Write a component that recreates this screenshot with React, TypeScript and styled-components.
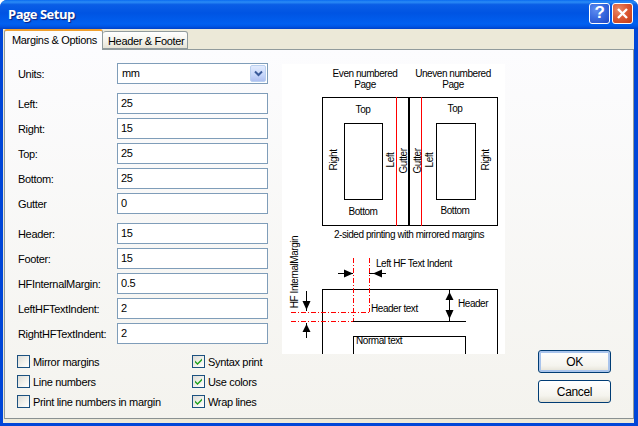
import React from 'react';
import styled, { createGlobalStyle } from 'styled-components';

const GlobalStyle = createGlobalStyle`
  html, body {
    margin: 0;
    height: 426px;
    background: #ffffff;
    overflow: hidden;
  }

  #root {
    height: 426px;
  }
`;

const uiFont = `'Liberation Sans', Arial, sans-serif`;

const Dialog = styled.div`
  display: flex;
  flex-direction: column;
  width: 638px;
  height: 426px;
  border-radius: 7px 7px 0 0;
  overflow: hidden;
  background: #0046d8;
  font-family: ${uiFont};
  font-size: 11px;
  letter-spacing: -0.33px;
  color: #000;
`;

const TitleBar = styled.div`
  display: flex;
  align-items: center;
  justify-content: space-between;
  height: 29px;
  flex-shrink: 0;
  padding: 0 5px 3px 8px;
  box-sizing: border-box;
  background: linear-gradient(180deg, #0a6af0 0, #2a8cf6 7%, #0a5ee6 16%, #0054e3 45%, #0160f0 82%, #0058e8 90%, #0042c8 100%);
`;

const Title = styled.span`
  font-family: 'Open Sans', sans-serif;
  font-weight: 700;
  font-size: 13px;
  letter-spacing: -0.5px;
  color: #fff;
  text-shadow: 1px 1px 1px #0f1f7a;
  padding-top: 2px;
`;

const Caption = styled.div`
  display: flex;
  gap: 2px;
`;

const CaptionButton = styled.div<{ $tone: 'help' | 'close' }>`
  display: flex;
  align-items: center;
  justify-content: center;
  width: 21px;
  height: 21px;
  box-sizing: border-box;
  border: 1px solid #fff;
  border-radius: 3px;
  background: ${(p) =>
    p.$tone === 'help'
      ? 'radial-gradient(circle at 30% 30%, #5f8df0 0, #3a6be0 45%, #1f46c4 100%)'
      : 'radial-gradient(circle at 30% 30%, #ea8a68 0, #dc5a35 45%, #c23a16 100%)'};
  color: #fff;
  font: 700 17px 'Liberation Sans', sans-serif;
`;

const Frame = styled.div`
  flex: 1;
  display: flex;
  flex-direction: column;
  min-height: 0;
  margin: 0 4px 3px 3px;
  background: #ece9d8;
  padding: 0 0 4px 1px;
`;

const TabStrip = styled.div`
  display: flex;
  align-items: flex-end;
  height: 20px;
  flex-shrink: 0;
  position: relative;
  z-index: 1;
`;

const Tab = styled.div<{ $active?: boolean }>`
  box-sizing: border-box;
  height: ${(p) => (p.$active ? '21px' : '18px')};
  margin-bottom: ${(p) => (p.$active ? '-1px' : '0')};
  padding: ${(p) => (p.$active ? '3px 0 0 7px' : '3px 0 0 5px')};
  width: ${(p) => (p.$active ? '99px' : '85px')};
  border: 1px solid #919b9c;
  border-bottom: ${(p) => (p.$active ? '0' : '1px solid #919b9c')};
  border-left: ${(p) => (p.$active ? '1px solid #919b9c' : '0')};
  border-radius: 3px 3px 0 0;
  background: ${(p) => (p.$active ? '#fcfcfe' : 'linear-gradient(180deg, #fff 0, #f3f2ea 60%, #e6e3d6 100%)')};
  border-top: ${(p) => (p.$active ? '2px solid #f0a030' : '1px solid #919b9c')};
  white-space: nowrap;
`;

const Panel = styled.div`
  flex: 1;
  display: flex;
  min-height: 0;
  box-sizing: border-box;
  padding: 13px 22px 15px 12px;
  border: 1px solid #919b9c;
  border-bottom-color: #8a9192;
  background: linear-gradient(180deg, #fcfcfe 0, #f4f3ee 100%);
`;

const Form = styled.div`
  display: flex;
  flex-direction: column;
  width: 251px;
  flex-shrink: 0;
`;

const Row = styled.div<{ $gap?: number }>`
  display: flex;
  align-items: center;
  height: 21px;
  margin-top: ${(p) => p.$gap ?? 4}px;
`;

const Label = styled.div`
  width: 100px;
  flex-shrink: 0;
  padding-left: 1px;
  box-sizing: border-box;
`;

const Field = styled.div`
  width: 151px;
  height: 21px;
  box-sizing: border-box;
  padding: 3px 0 0 3px;
  border: 1px solid #7f9db9;
  background: #fff;
`;

const SelectField = styled(Field)`
  display: flex;
  justify-content: space-between;
  padding: 1px;
`;

const SelectValue = styled.span`
  padding: 2px 0 0 3px;
`;

const SelectArrow = styled.div`
  display: flex;
  align-items: center;
  justify-content: center;
  width: 16px;
  height: 17px;
  box-sizing: border-box;
  border: 1px solid #bad0f0;
  border-radius: 2px;
  background: linear-gradient(180deg, #e2ebfd 0, #c6d6fa 60%, #aebff0 100%);
`;

const Checks = styled.div`
  display: grid;
  grid-template-columns: 175px 1fr;
  grid-auto-rows: 20px;
  margin-top: 11px;
`;

const CheckRow = styled.div`
  display: flex;
  align-items: flex-start;
  gap: 3px;
  white-space: nowrap;
  line-height: 14px;
`;

const Box = styled.div`
  display: flex;
  align-items: center;
  justify-content: center;
  width: 13px;
  height: 13px;
  flex-shrink: 0;
  box-sizing: border-box;
  border: 1px solid #1c5180;
  background: linear-gradient(135deg, #dcdcd7 0, #f4f3ee 60%, #ffffff 100%);
`;

const Diagram = styled.svg`
  display: block;
  flex-shrink: 0;
  width: 223px;
  height: 290px;
  margin: 1px 0 0 14px;
  background: #fff;
`;

const Side = styled.div`
  display: flex;
  flex-direction: column;
  justify-content: flex-end;
  gap: 7px;
  margin-left: 33px;
`;

const Button = styled.div<{ $default?: boolean }>`
  display: flex;
  align-items: center;
  justify-content: center;
  width: 73px;
  height: 23px;
  box-sizing: border-box;
  border: 1px solid #003c74;
  border-radius: 3px;
  background: linear-gradient(180deg, #ffffff 0, #f5f4ee 70%, #e3e0d4 100%);
  box-shadow: ${(p) => (p.$default ? 'inset 0 0 0 2px #a9c4ec' : 'none')};
  font-size: 12px;
`;

const Check = () => (
  <svg width="9" height="9" viewBox="0 0 9 9">
    <path d="M1 3.5 L3.5 6 L8 1.5 L8 3.5 L3.5 8 L1 5.5 Z" fill="#21a121" />
  </svg>
);

const fields: [string, string, number?][] = [
  ['Left:', '25', 9],
  ['Right:', '15'],
  ['Top:', '25'],
  ['Bottom:', '25'],
  ['Gutter', '0'],
  ['Header:', '15', 9],
  ['Footer:', '15'],
  ['HFInternalMargin:', '0.5'],
  ['LeftHFTextIndent:', '2'],
  ['RightHFTextIndent:', '2'],
];

const checks: [string, boolean][] = [
  ['Mirror margins', false],
  ['Syntax print', true],
  ['Line numbers', false],
  ['Use colors', true],
  ['Print line numbers in margin', false],
  ['Wrap lines', true],
];

// diagram drawn in page coords, minus the svg origin (282, 64)
const Vertical = ({ x, y, children }: { x: number; y: number; children: string }) => (
  <text x={0} y={0} textAnchor="middle" transform={`translate(${x - 282} ${y - 64}) rotate(-90)`}>
    {children}
  </text>
);

const Label2 = ({ x, y, a, children }: { x: number; y: number; a?: 'middle'; children: string }) => (
  <text x={x - 282} y={y - 64} textAnchor={a}>
    {children}
  </text>
);

const PageDiagram = () => (
  <Diagram viewBox="0 0 223 290" fontFamily={uiFont} fontSize="10" letterSpacing="-0.45" fill="#000">
    <g fill="none" stroke="#000" shapeRendering="crispEdges">
      <rect x="40.5" y="33.5" width="175" height="128" />
      <rect x="62.5" y="59.5" width="38" height="76" />
      <rect x="154.5" y="59.5" width="39" height="76" />
      <line x1="127" y1="33" x2="127" y2="162" strokeWidth="2" />
      <line x1="114.5" y1="33" x2="114.5" y2="162" stroke="#f00" />
      <line x1="139.5" y1="33" x2="139.5" y2="162" stroke="#f00" />
      <path d="M40.5 290 V225.5 H215.5 V290" />
      <path d="M71 257.5 H183.5 M71.5 290 V272.5 H183.5 V290" />
      <g stroke="#f00" strokeDasharray="5 2 1 2">
        <path d="M71.5 194 V257" />
        <path d="M87.5 194 V248" />
        <path d="M9 248.5 H87" />
        <path d="M9 257.5 H71" />
      </g>
      <path d="M56 209.5 H71 M87 209.5 H104 M167.5 225 V257 M24.5 227 V247 M24.5 259 V274" />
    </g>
    <g stroke="none" fill="#000">
      <path d="M62 205.5 L71 209.5 L62 213.5 Z" />
      <path d="M100 205.5 L91 209.5 L100 213.5 Z" />
      <path d="M167.5 228 L171.5 236 L163.5 236 Z" />
      <path d="M167.5 255 L171.5 246 L163.5 246 Z" />
      <path d="M24.5 246 L28.5 237 L20.5 237 Z" />
      <path d="M24.5 260 L28.5 268 L20.5 268 Z" />
    </g>
    <Label2 x={365} y={77} a="middle">Even numbered</Label2>
    <Label2 x={365} y={88} a="middle">Page</Label2>
    <Label2 x={453} y={77} a="middle">Uneven numbered</Label2>
    <Label2 x={453} y={88} a="middle">Page</Label2>
    <Label2 x={363} y={113} a="middle">Top</Label2>
    <Label2 x={455} y={112} a="middle">Top</Label2>
    <Label2 x={363} y={215} a="middle">Bottom</Label2>
    <Label2 x={455} y={214} a="middle">Bottom</Label2>
    <Vertical x={337} y={160}>Right</Vertical>
    <Vertical x={394} y={160}>Left</Vertical>
    <Vertical x={407} y={161}>Gutter</Vertical>
    <Vertical x={421} y={161}>Gutter</Vertical>
    <Vertical x={433} y={160}>Left</Vertical>
    <Vertical x={489} y={160}>Right</Vertical>
    <Label2 x={409} y={238} a="middle">2-sided printing with mirrored margins</Label2>
    <Vertical x={298} y={272}>HF InternalMargin</Vertical>
    <Label2 x={376} y={267}>Left HF Text Indent</Label2>
    <Label2 x={371} y={312}>Header text</Label2>
    <Label2 x={458} y={307}>Header</Label2>
    <Label2 x={356} y={344}>Normal text</Label2>
  </Diagram>
);

const App = () => {
  return (
    <Dialog>
      <GlobalStyle />
      <TitleBar>
        <Title>Page Setup</Title>
        <Caption>
          <CaptionButton $tone="help">?</CaptionButton>
          <CaptionButton $tone="close">
            <svg width="13" height="13" viewBox="0 0 13 13">
              <path d="M2 2 L11 11 M11 2 L2 11" stroke="#fff" strokeWidth="2.4" />
            </svg>
          </CaptionButton>
        </Caption>
      </TitleBar>
      <Frame>
        <TabStrip>
          <Tab $active>Margins &amp; Options</Tab>
          <Tab>Header &amp; Footer</Tab>
        </TabStrip>
        <Panel>
          <Form>
            <Row $gap={0}>
              <Label>Units:</Label>
              <SelectField>
                <SelectValue>mm</SelectValue>
                <SelectArrow>
                  <svg width="9" height="7" viewBox="0 0 9 7">
                    <path d="M1 1.5 L4.5 5 L8 1.5" fill="none" stroke="#3a5a9a" strokeWidth="2" />
                  </svg>
                </SelectArrow>
              </SelectField>
            </Row>
            {fields.map(([label, value, gap]) => (
              <Row key={label} $gap={gap}>
                <Label>{label}</Label>
                <Field>{value}</Field>
              </Row>
            ))}
            <Checks>
              {checks.map(([label, on]) => (
                <CheckRow key={label}>
                  <Box>{on && <Check />}</Box>
                  {label}
                </CheckRow>
              ))}
            </Checks>
          </Form>
          <PageDiagram />
          <Side>
            <Button $default>OK</Button>
            <Button>Cancel</Button>
          </Side>
        </Panel>
      </Frame>
    </Dialog>
  );
};

export default App;
